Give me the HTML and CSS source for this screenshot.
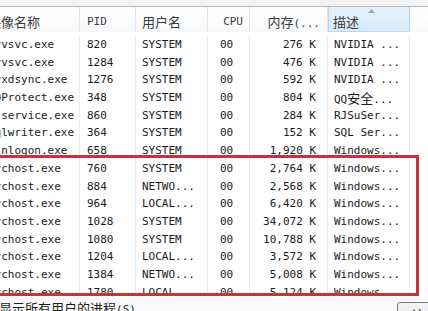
FILE: index.html
```html
<!DOCTYPE html>
<html>
<head>
  <link rel="stylesheet" href="styles.css">
</head>
<body>
  <div class="top-gap"></div>

  <div class="list">
    <div class="row head">
      <div class="cell name"><span class="zh">映像名称</span></div>
      <div class="cell pid">PID</div>
      <div class="cell user"><span class="zh">用户名</span></div>
      <div class="cell cpu">CPU</div>
      <div class="cell mem"><span class="zh">内存</span>(...</div>
      <div class="cell desc sorted">
        <span class="zh">描述</span>
        <svg class="sort-arrow" width="7" height="4" viewBox="0 0 7 4"><polygon points="0,4 3.5,0 7,4" fill="#98a6b6"/></svg>
      </div>
      <div class="cell rest"></div>
    </div>

    <div class="rows">
      <div class="row"><div class="cell name">nvvsvc.exe</div><div class="cell pid">820</div><div class="cell user">SYSTEM</div><div class="cell cpu">00</div><div class="cell mem">276 K</div><div class="cell desc">NVIDIA ...</div><div class="cell rest"></div></div>
      <div class="row"><div class="cell name">nvvsvc.exe</div><div class="cell pid">1284</div><div class="cell user">SYSTEM</div><div class="cell cpu">00</div><div class="cell mem">476 K</div><div class="cell desc">NVIDIA ...</div><div class="cell rest"></div></div>
      <div class="row"><div class="cell name">nvxdsync.exe</div><div class="cell pid">1276</div><div class="cell user">SYSTEM</div><div class="cell cpu">00</div><div class="cell mem">592 K</div><div class="cell desc">NVIDIA ...</div><div class="cell rest"></div></div>
      <div class="row"><div class="cell name">QQProtect.exe</div><div class="cell pid">348</div><div class="cell user">SYSTEM</div><div class="cell cpu">00</div><div class="cell mem">804 K</div><div class="cell desc">QQ<span class="zh">安全</span>...</div><div class="cell rest"></div></div>
      <div class="row"><div class="cell name">RJservice.exe</div><div class="cell pid">860</div><div class="cell user">SYSTEM</div><div class="cell cpu">00</div><div class="cell mem">284 K</div><div class="cell desc">RJSuSer...</div><div class="cell rest"></div></div>
      <div class="row"><div class="cell name">sqlwriter.exe</div><div class="cell pid">364</div><div class="cell user">SYSTEM</div><div class="cell cpu">00</div><div class="cell mem">152 K</div><div class="cell desc">SQL Ser...</div><div class="cell rest"></div></div>
      <div class="row"><div class="cell name">winlogon.exe</div><div class="cell pid">658</div><div class="cell user">SYSTEM</div><div class="cell cpu">00</div><div class="cell mem">1,920 K</div><div class="cell desc">Windows...</div><div class="cell rest"></div></div>
      <div class="row"><div class="cell name">svchost.exe</div><div class="cell pid">760</div><div class="cell user">SYSTEM</div><div class="cell cpu">00</div><div class="cell mem">2,764 K</div><div class="cell desc">Windows...</div><div class="cell rest"></div></div>
      <div class="row"><div class="cell name">svchost.exe</div><div class="cell pid">884</div><div class="cell user">NETWO...</div><div class="cell cpu">00</div><div class="cell mem">2,568 K</div><div class="cell desc">Windows...</div><div class="cell rest"></div></div>
      <div class="row"><div class="cell name">svchost.exe</div><div class="cell pid">964</div><div class="cell user">LOCAL...</div><div class="cell cpu">00</div><div class="cell mem">6,420 K</div><div class="cell desc">Windows...</div><div class="cell rest"></div></div>
      <div class="row"><div class="cell name">svchost.exe</div><div class="cell pid">1028</div><div class="cell user">SYSTEM</div><div class="cell cpu">00</div><div class="cell mem">34,072 K</div><div class="cell desc">Windows...</div><div class="cell rest"></div></div>
      <div class="row"><div class="cell name">svchost.exe</div><div class="cell pid">1080</div><div class="cell user">SYSTEM</div><div class="cell cpu">00</div><div class="cell mem">10,788 K</div><div class="cell desc">Windows...</div><div class="cell rest"></div></div>
      <div class="row"><div class="cell name">svchost.exe</div><div class="cell pid">1204</div><div class="cell user">LOCAL...</div><div class="cell cpu">00</div><div class="cell mem">3,572 K</div><div class="cell desc">Windows...</div><div class="cell rest"></div></div>
      <div class="row"><div class="cell name">svchost.exe</div><div class="cell pid">1384</div><div class="cell user">NETWO...</div><div class="cell cpu">00</div><div class="cell mem">5,008 K</div><div class="cell desc">Windows...</div><div class="cell rest"></div></div>
      <div class="row"><div class="cell name">svchost.exe</div><div class="cell pid">1780</div><div class="cell user">LOCAL...</div><div class="cell cpu">00</div><div class="cell mem">5,124 K</div><div class="cell desc">Windows...</div><div class="cell rest"></div></div>
    </div>
  </div>

  <div class="footer">
    <label class="show-all"><span class="zh">显示所有用户的进程</span>(S)</label>
    <button class="end-btn"><span class="zh">结束进程</span>(E)</button>
  </div>

  <div class="mark"></div>
</body>
</html>
```

FILE: styles.css
```css
body {
  margin: 0;
  width: 428px;
  height: 311px;
  overflow: hidden;
  position: relative;
  background: #fafafa;
  font-family: "DejaVu Sans Mono", "Noto Sans CJK SC", monospace;
  font-size: 11px;
  color: #1a1a1a;
}

.zh {
  font-family: "Noto Sans CJK SC", sans-serif;
  font-size: 13px;
}

.top-gap {
  height: 6px;
  background: #f2f2f2;
}

.list {
  margin-left: -16px;
  width: 470px;
  height: 289px;
  border-top: 1px solid #b4b9be;
  background: #fff;
  overflow: hidden;
}

.row {
  display: grid;
  grid-template-columns: 96px 56px 72px 42px 78px 82px 1fr;
  height: 17.7px;
  line-height: 17.7px;
}

.cell {
  border-right: 1px solid #e9edf1;
  white-space: nowrap;
  overflow: hidden;
}

.name { padding-left: 4px; }
.pid { padding-left: 7px; }
.user { padding-left: 6px; }
.cpu { padding-left: 12px; }
.mem { text-align: right; padding-right: 11px; }
.desc { padding-left: 6px; }
.rest { border-right: none; }

.head {
  height: 25px;
  line-height: 21px;
  color: #3c3c3c;
  background: linear-gradient(#ffffff, #f7f8f9);
}

.head .cell {
  padding-top: 4px;
  border-right-color: #e2e5e8;
}

.head .cpu {
  padding-left: 0;
  padding-right: 6px;
  text-align: right;
}

.head .mem { padding-right: 7px; }

.head .sorted {
  position: relative;
  padding-left: 4px;
  background: linear-gradient(#e3f1fc, #d9ecfa);
  border: 1px solid #b7d6ef;
  border-top: none;
}

.sort-arrow {
  position: absolute;
  left: 39px;
  top: 2px;
}

.rows {
  padding-top: 4px;
}

.footer {
  display: grid;
  grid-template-columns: 397px 90px;
  padding-top: 4px;
  width: 500px;
}

.show-all {
  margin-left: -1px;
  line-height: 16px;
  color: #1e1e1e;
}

.end-btn {
  margin-top: 2px;
  height: 24px;
  padding: 0 0 0 13px;
  text-align: left;
  border: 1px solid #7a7a7a;
  border-radius: 3px;
  background: linear-gradient(#f6f6f6, #dedede);
  font-family: "DejaVu Sans Mono", monospace;
  font-size: 11px;
  color: #1e1e1e;
}

.mark {
  position: absolute;
  top: 155px;
  left: -10px;
  width: 423px;
  height: 135px;
  border: 3px solid #c4343a;
}
```
